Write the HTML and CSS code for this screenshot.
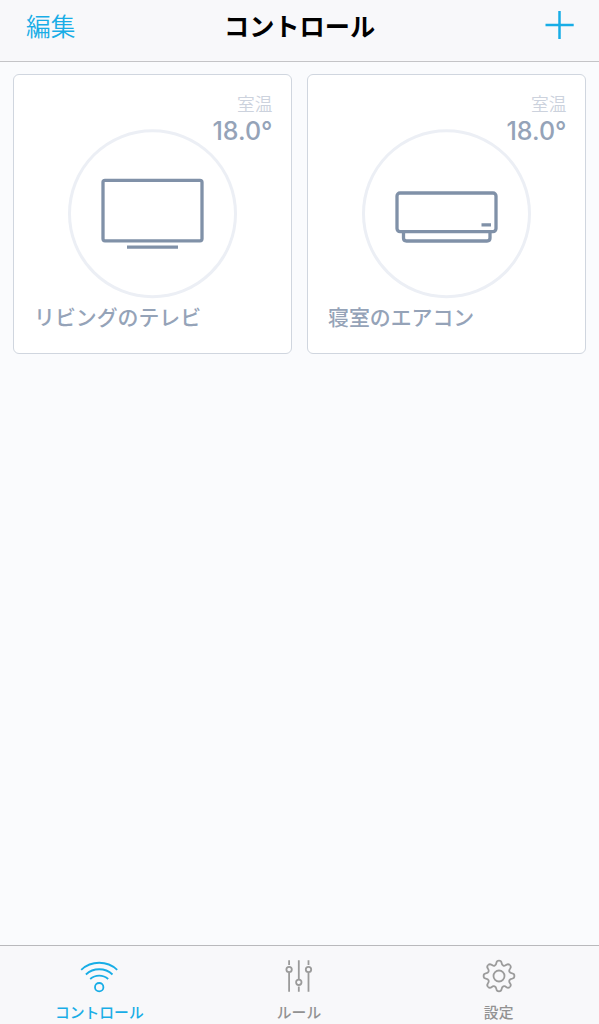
FILE: index.html
```html
<!DOCTYPE html>
<html lang="ja">
<head>
    <meta charset="UTF-8">
    <meta name="viewport" content="width=device-width, initial-scale=1.0">
    <title>コントロール</title>
    <link rel="stylesheet" href="styles.css">
</head>
<body>
    <header class="navbar">
        <a class="edit">編集</a>
        <h1>コントロール</h1>
        <a class="add">
            <svg width="30" height="30" viewBox="0 0 30 30"><path d="M1.500 15H29.700M15.500 1V29"/></svg>
        </a>
    </header>

    <main class="cards">
        <div class="card">
            <div class="temp">
                <span class="temp-label">室温</span>
                <span class="temp-value">18.0°</span>
            </div>
            <svg class="device" width="171" height="170" viewBox="0 0 171 170">
                <circle class="ring" cx="85.500" cy="84.700" r="83"/>
                <rect x="36" y="51.300" width="99" height="60.500" rx="2"/>
                <path d="M60 118.200H111"/>
            </svg>
            <p class="name">リビングのテレビ</p>
        </div>
        <div class="card">
            <div class="temp">
                <span class="temp-label">室温</span>
                <span class="temp-value">18.0°</span>
            </div>
            <svg class="device" width="171" height="170" viewBox="0 0 171 170">
                <circle class="ring" cx="85.500" cy="84.700" r="83"/>
                <rect x="36" y="64" width="99" height="38.600" rx="3"/>
                <path d="M42.500 103V109Q42.500 112 45.500 112H126Q129 112 129 109V103M120.500 95.800H130"/>
            </svg>
            <p class="name">寝室のエアコン</p>
        </div>
    </main>

    <nav class="tabbar">
        <a class="tab active">
            <svg width="40" height="36" viewBox="-19.200 -18 40 36">
                <circle cx="0" cy="11.200" r="4.200"/>
                <path d="M-18 -6.200A26.500 26.500 0 0 1 18 -6.200M-13.300 -1.500A19.500 19.500 0 0 1 13.300 -1.500M-9 3A13.500 13.500 0 0 1 9 3"/>
            </svg>
            <span>コントロール</span>
        </a>
        <a class="tab">
            <svg width="40" height="36" viewBox="-19.800 -18 40 36">
                <path d="M-9.700 -15.800V-11M-9.700 -3.500V15.800M0 -15.800V3M0 10.500V15.800M9.700 -15.800V-11M9.700 -3.500V15.800"/>
                <circle cx="-9.700" cy="-6.500" r="2.700"/>
                <circle cx="0" cy="6.300" r="2.700"/>
                <circle cx="9.700" cy="-6.500" r="2.700"/>
            </svg>
            <span>ルール</span>
        </a>
        <a class="tab">
            <svg width="40" height="36" viewBox="-20 -18 40 36">
                <defs>
                    <path id="tooth" d="M0 -15.400C1.800 -15.400 2.400 -14.600 2.600 -13.200C2.800 -11.500 3.200 -10.860 4.300 -10.400C5.420 -9.940 6.150 -10.110 7.500 -11.170C8.630 -12.020 9.620 -12.160 10.890 -10.890"/>
                </defs>
                <use href="#tooth"/>
                <use href="#tooth" transform="rotate(45)"/>
                <use href="#tooth" transform="rotate(90)"/>
                <use href="#tooth" transform="rotate(135)"/>
                <use href="#tooth" transform="rotate(180)"/>
                <use href="#tooth" transform="rotate(225)"/>
                <use href="#tooth" transform="rotate(270)"/>
                <use href="#tooth" transform="rotate(315)"/>
                <circle cx="0" cy="0" r="5.500"/>
            </svg>
            <span>設定</span>
        </a>
    </nav>
</body>
</html>
```
FILE: styles.css
```css
* {
    box-sizing: border-box;
}

body {
    font-family: 'Noto Sans CJK JP', sans-serif;
    background-color: #fafbfd;
    margin: 0;
    display: flex;
    flex-direction: column;
    height: 100vh;
}

svg {
    display: block;
    fill: none;
}

.navbar {
    display: grid;
    grid-template-columns: 1fr auto 1fr;
    align-items: center;
    height: 62px;
    padding: 0 25px 11px;
    background-color: #f8f8fa;
    border-bottom: 1px solid #c4c4c7;
}

.navbar h1 {
    margin: 0;
    font-size: 25.2px;
    line-height: 30px;
    font-weight: 700;
    color: #000;
}

.edit {
    padding-left: 1px;
    font-size: 24.7px;
    line-height: 30px;
    font-weight: 350;
    color: #18ade6;
}

.add {
    justify-self: end;
}

.add svg {
    stroke: #18ade6;
    stroke-width: 2.5;
}

.cards {
    flex: 1;
    display: grid;
    grid-template-columns: 279px 279px;
    gap: 15px;
    align-content: start;
    padding: 12px 13px;
}

.card {
    display: grid;
    justify-items: center;
    align-content: start;
    height: 280px;
    background-color: #fff;
    border: 1px solid #d0d6df;
    border-radius: 6px;
}

/* temperature and device drawing share one grid cell */
.temp,
.device {
    grid-area: 1 / 1;
}

.temp {
    justify-self: end;
    display: flex;
    flex-direction: column;
    align-items: flex-end;
    padding: 17px 18.5px 0 0;
}

.temp-label {
    font-size: 17.7px;
    line-height: 22px;
    font-weight: 350;
    color: #ccd2dd;
}

.temp-value {
    margin-top: 1px;
    font-family: Inter, sans-serif;
    font-size: 25px;
    line-height: 32px;
    font-weight: 500;
    color: #95a3b8;
}

.device {
    margin-top: 54px;
    stroke: #8091a8;
    stroke-width: 3.3;
}

.ring {
    stroke: #eceff5;
    stroke-width: 3;
}

.name {
    justify-self: start;
    margin: 2px 0 0 20px;
    font-size: 20.9px;
    line-height: 30px;
    font-weight: 500;
    color: #95a3b8;
}

.tabbar {
    display: grid;
    grid-template-columns: repeat(3, 1fr);
    height: 79px;
    background-color: #f8f8fa;
    border-top: 1px solid #b9b9bc;
}

.tab {
    display: flex;
    flex-direction: column;
    align-items: center;
    padding-top: 12px;
    font-size: 14.8px;
    line-height: 20px;
    font-weight: 500;
    color: #929292;
}

.tab svg {
    stroke: #9b9b9b;
    stroke-width: 1.8;
}

.tab span {
    margin: 8px 1px 0 0;
}

.tab.active {
    color: #18ade6;
}

.tab.active svg {
    stroke: #18ade6;
}
```
